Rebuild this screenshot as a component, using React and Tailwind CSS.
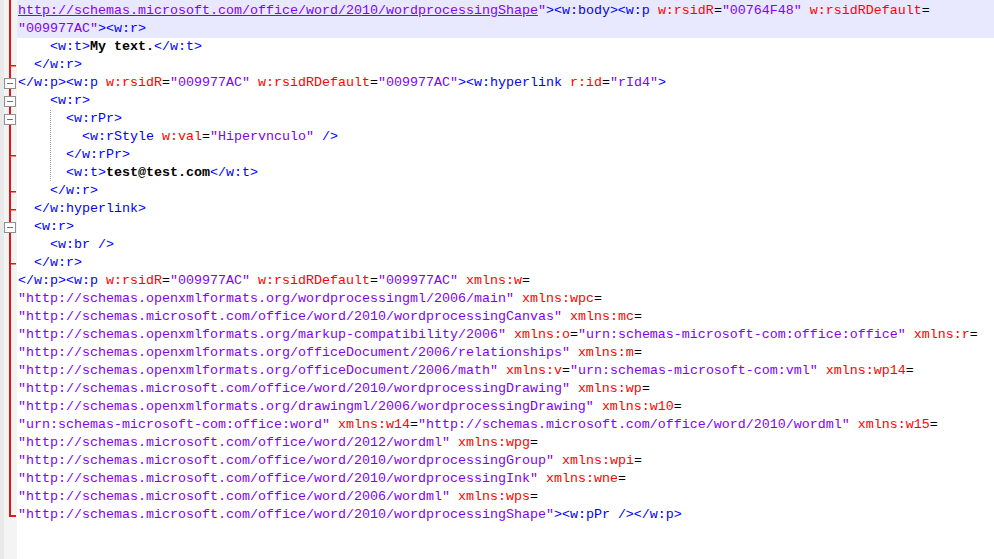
import React from "react";

// colour per token kind, Notepad++ XML default style
const kinds = {
  t: "text-[#0000ff]",
  a: "text-[#ff0000]",
  v: "text-[#8000ff]",
  u: "text-[#8000ff] underline",
  e: "text-black",
  x: "text-black font-bold",
};

const lines = [
  { f: "line", hl: true, s: [["u", "http://schemas.microsoft.com/office/word/2010/wordprocessingShape"], ["v", "\""], ["t", "><w:body><w:p "], ["a", "w:rsidR"], ["e", "="], ["v", "\"00764F48\""], ["t", " "], ["a", "w:rsidRDefault"], ["e", "="]] },
  { f: "line", hl: true, s: [["v", "\"009977AC\""], ["t", "><w:r>"]] },
  { f: "line", s: [["t", "    <w:t>"], ["x", "My text."], ["t", "</w:t>"]] },
  { f: "tick", s: [["t", "  </w:r>"]] },
  { f: "box", s: [["t", "</w:p><w:p "], ["a", "w:rsidR"], ["e", "="], ["v", "\"009977AC\""], ["t", " "], ["a", "w:rsidRDefault"], ["e", "="], ["v", "\"009977AC\""], ["t", "><w:hyperlink "], ["a", "r:id"], ["e", "="], ["v", "\"rId4\""], ["t", ">"]] },
  { f: "box", s: [["t", "    <w:r>"]] },
  { f: "box", g: true, s: [["t", "<w:rPr>"]] },
  { f: "line", g: true, in: "  ", s: [["t", "<w:rStyle "], ["a", "w:val"], ["e", "="], ["v", "\"Hipervnculo\""], ["t", " />"]] },
  { f: "tick", g: true, s: [["t", "</w:rPr>"]] },
  { f: "line", g: true, s: [["t", "<w:t>"], ["x", "test@test.com"], ["t", "</w:t>"]] },
  { f: "tick", s: [["t", "    </w:r>"]] },
  { f: "tick", s: [["t", "  </w:hyperlink>"]] },
  { f: "box", s: [["t", "  <w:r>"]] },
  { f: "line", s: [["t", "    <w:br />"]] },
  { f: "tick", s: [["t", "  </w:r>"]] },
  { f: "line", s: [["t", "</w:p><w:p "], ["a", "w:rsidR"], ["e", "="], ["v", "\"009977AC\""], ["t", " "], ["a", "w:rsidRDefault"], ["e", "="], ["v", "\"009977AC\""], ["t", " "], ["a", "xmlns:w"], ["e", "="]] },
  { f: "line", s: [["v", "\"http://schemas.openxmlformats.org/wordprocessingml/2006/main\""], ["t", " "], ["a", "xmlns:wpc"], ["e", "="]] },
  { f: "line", s: [["v", "\"http://schemas.microsoft.com/office/word/2010/wordprocessingCanvas\""], ["t", " "], ["a", "xmlns:mc"], ["e", "="]] },
  { f: "line", s: [["v", "\"http://schemas.openxmlformats.org/markup-compatibility/2006\""], ["t", " "], ["a", "xmlns:o"], ["e", "="], ["v", "\"urn:schemas-microsoft-com:office:office\""], ["t", " "], ["a", "xmlns:r"], ["e", "="]] },
  { f: "line", s: [["v", "\"http://schemas.openxmlformats.org/officeDocument/2006/relationships\""], ["t", " "], ["a", "xmlns:m"], ["e", "="]] },
  { f: "line", s: [["v", "\"http://schemas.openxmlformats.org/officeDocument/2006/math\""], ["t", " "], ["a", "xmlns:v"], ["e", "="], ["v", "\"urn:schemas-microsoft-com:vml\""], ["t", " "], ["a", "xmlns:wp14"], ["e", "="]] },
  { f: "line", s: [["v", "\"http://schemas.microsoft.com/office/word/2010/wordprocessingDrawing\""], ["t", " "], ["a", "xmlns:wp"], ["e", "="]] },
  { f: "line", s: [["v", "\"http://schemas.openxmlformats.org/drawingml/2006/wordprocessingDrawing\""], ["t", " "], ["a", "xmlns:w10"], ["e", "="]] },
  { f: "line", s: [["v", "\"urn:schemas-microsoft-com:office:word\""], ["t", " "], ["a", "xmlns:w14"], ["e", "="], ["v", "\"http://schemas.microsoft.com/office/word/2010/wordml\""], ["t", " "], ["a", "xmlns:w15"], ["e", "="]] },
  { f: "line", s: [["v", "\"http://schemas.microsoft.com/office/word/2012/wordml\""], ["t", " "], ["a", "xmlns:wpg"], ["e", "="]] },
  { f: "line", s: [["v", "\"http://schemas.microsoft.com/office/word/2010/wordprocessingGroup\""], ["t", " "], ["a", "xmlns:wpi"], ["e", "="]] },
  { f: "line", s: [["v", "\"http://schemas.microsoft.com/office/word/2010/wordprocessingInk\""], ["t", " "], ["a", "xmlns:wne"], ["e", "="]] },
  { f: "line", s: [["v", "\"http://schemas.microsoft.com/office/word/2006/wordml\""], ["t", " "], ["a", "xmlns:wps"], ["e", "="]] },
  { f: "end", s: [["v", "\"http://schemas.microsoft.com/office/word/2010/wordprocessingShape\""], ["t", "><w:pPr /></w:p>"]] },
];

const red = "#e81414";

// fold margin cell: grey strip, red fold line and +/- boxes
const FoldMark = ({ type, h = 18 }) => (
  <svg width="17" height={h} viewBox={`0 0 17 ${h}`} className="block shrink-0">
    <rect x="0" y="0" width="17" height={h} fill="#f4f4f4" />
    <rect x="0" y="0" width="4" height={h} fill="#e9e9e9" />
    {type === "end" && (
      <>
        <rect x="9" y="0" width="2" height="11" fill={red} />
        <rect x="9" y="9" width="7" height="2" fill={red} />
      </>
    )}
    {type && type !== "end" && <rect x="9" y="0" width="2" height={h} fill={red} />}
    {type === "tick" && <rect x="9" y="9" width="7" height="1.5" fill={red} />}
    {type === "box" && (
      <>
        <rect x="4" y="4" width="12" height="11" fill="#909090" />
        <rect x="5" y="5" width="10" height="9" fill="#ffffff" />
        <rect x="7" y="9" width="6" height="1" fill="#707070" />
      </>
    )}
  </svg>
);

const Line = ({ line }) => (
  <div className={`flex h-[18px] ${line.hl ? "bg-[#e8e8ff]" : "bg-white"}`}>
    <FoldMark type={line.f} />
    <div className="pl-[1px] whitespace-pre leading-[18px]">
      {line.g && (
        <>
          <span>{"    "}</span>
          <span className="inline-block h-[18px] align-top bg-[repeating-linear-gradient(to_bottom,#a0a0a0_0_1px,transparent_1px_2px)] bg-no-repeat bg-[length:1px_100%]">
            {"  "}
            {line.in || ""}
          </span>
        </>
      )}
      {line.s.map(([k, txt], i) => (
        <span key={i} className={kinds[k]}>
          {txt}
        </span>
      ))}
    </div>
  </div>
);

export default function App() {
  return (
    <div className="w-[994px] h-[559px] overflow-hidden bg-white font-['Liberation_Mono','Courier_New',monospace] text-[13.33px]">
      <div className="flex h-[2px]">
        <FoldMark type="line" h={2} />
        <div className="flex-1 bg-[#e8e8ff]"></div>
      </div>
      {lines.map((l, i) => (
        <Line key={i} line={l} />
      ))}
      <div className="flex h-[40px]">
        <FoldMark h={40} />
        <div className="flex-1 bg-white"></div>
      </div>
    </div>
  );
}
